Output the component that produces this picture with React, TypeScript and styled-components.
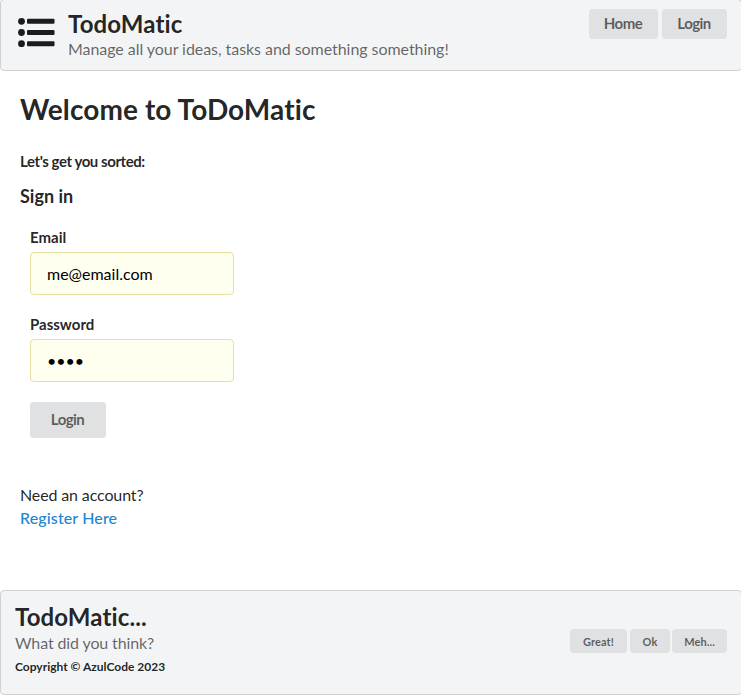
import React from 'react';
import styled, { createGlobalStyle } from 'styled-components';

const Global = createGlobalStyle`
  *, *::before, *::after { box-sizing: border-box; }
  body {
    margin: 0;
    background: #fff;
    font-family: Lato, sans-serif;
    font-size: 14px;
    line-height: 20px;
    color: rgba(0, 0, 0, 0.87);
    overflow: hidden;
    font-variant-ligatures: none;
    -webkit-font-smoothing: antialiased;
  }
`;

const Page = styled.div`
  display: flex;
  flex-direction: column;
  width: 742px;
  height: 697px;
`;

const Bar = styled.header`
  display: flex;
  height: 72px;
  margin-top: -1px;
  padding: 9px 14px 0 17px;
  background: #f3f4f5;
  border: 1px solid #d0d1d2;
  border-radius: 4px;
`;

const Logo = styled.svg`
  flex: none;
  width: 38px;
  height: 32px;
  margin: 7px 12px 0 0;
  fill: #1b1c1d;
`;

const Brand = styled.div`
  flex: 1;
`;

const Title = styled.div`
  font-size: 24px;
  line-height: 30px;
  font-weight: 700;
  letter-spacing: 0.12px;
`;

const Subtitle = styled.div`
  font-size: 16px;
  line-height: 20px;
  letter-spacing: -0.055px;
  color: rgba(0, 0, 0, 0.6);
`;

const Actions = styled.div`
  display: flex;
  gap: 4px;
`;

const Button = styled.button<{ $w: number; $size?: 'small' | 'form' }>`
  width: ${(p) => p.$w}px;
  height: ${(p) => (p.$size === 'small' ? 24 : p.$size === 'form' ? 36 : 30)}px;
  padding: ${(p) => (p.$size === 'small' ? '0' : '0 1px 3px 0')};
  border: 0;
  border-radius: 4px;
  background: #e0e1e2;
  color: rgba(0, 0, 0, 0.6);
  font-family: inherit;
  font-size: ${(p) => (p.$size === 'small' ? 11 : 15)}px;
  letter-spacing: ${(p) => (p.$size === 'small' ? 0.1 : -0.55)}px;
  font-weight: 700;
`;

const Main = styled.main`
  flex: 1;
  padding: 20px 20px 0;
`;

const Welcome = styled.h1`
  margin: 0;
  font-size: 28px;
  line-height: 36px;
  letter-spacing: 0.1px;
`;

const Lead = styled.h5`
  margin: 25px 0 0;
  font-size: 15px;
  line-height: 18px;
  letter-spacing: -0.43px;
`;

const SignIn = styled.h3`
  margin: 15px 0 0;
  font-size: 18px;
  line-height: 23px;
`;

const Form = styled.form`
  display: flex;
  flex-direction: column;
  align-items: flex-start;
  padding: 19px 10px 0;
`;

const Field = styled.div`
  display: flex;
  flex-direction: column;
  gap: 5px;
  margin-bottom: 19px;

  &:last-of-type {
    margin-bottom: 20px;
  }
`;

const Label = styled.label`
  font-size: 15px;
  line-height: 20px;
  font-weight: 700;
`;

const Input = styled.input`
  width: 204px;
  height: 43px;
  padding: 0 16px;
  border: 1px solid #e5dfa1;
  border-radius: 4px;
  background: #fffff0;
  color: #000;
  font-family: inherit;
  font-size: 16px;
  outline: 0;
`;

const Account = styled.div`
  margin-top: 45px;
  font-size: 16px;
  line-height: 23px;
  letter-spacing: -0.13px;
`;

const Link = styled.a`
  display: block;
  color: #2185d0;
  font-weight: 500;
  letter-spacing: 0.13px;
`;

const Footer = styled(Bar).attrs({ as: 'footer' })`
  height: 105px;
  margin: 0 0 2px;
  padding: 11px 14px 0 14px;
`;

const Copyright = styled.div`
  margin-top: 4px;
  font-size: 12px;
  line-height: 20px;
  font-weight: 700;
`;

const Feedback = styled(Actions)`
  gap: 3px;
  padding-top: 27px;

  & > :last-child {
    margin-left: -1px;
  }
`;

const FooterSubtitle = styled(Subtitle)`
  margin-top: 1px;
  letter-spacing: -0.12px;
`;

export default function App() {
  return (
    <Page>
      <Global />
      <Bar>
        <Logo viewBox="0 0 38 32">
          {[5.3, 16.5, 27.7].map((y) => (
            <React.Fragment key={y}>
              <circle cx="3.5" cy={y} r="3.4" />
              <rect x="9" y={y - 2.5} width="27.5" height="5" rx="1" />
            </React.Fragment>
          ))}
        </Logo>
        <Brand>
          <Title>TodoMatic</Title>
          <Subtitle>Manage all your ideas, tasks and something something!</Subtitle>
        </Brand>
        <Actions>
          <Button $w={69}>Home</Button>
          <Button $w={65}>Login</Button>
        </Actions>
      </Bar>
      <Main>
        <Welcome>Welcome to ToDoMatic</Welcome>
        <Lead>Let's get you sorted:</Lead>
        <SignIn>Sign in</SignIn>
        <Form>
          <Field>
            <Label htmlFor="email">Email</Label>
            <Input id="email" defaultValue="me@email.com" />
          </Field>
          <Field>
            <Label htmlFor="password">Password</Label>
            <Input id="password" type="password" defaultValue="1234" />
          </Field>
          <Button type="button" $w={76} $size="form">Login</Button>
        </Form>
        <Account>
          Need an account?
          <Link>Register Here</Link>
        </Account>
      </Main>
      <Footer>
        <Brand>
          <Title>TodoMatic...</Title>
          <FooterSubtitle>What did you think?</FooterSubtitle>
          <Copyright>Copyright © AzulCode 2023</Copyright>
        </Brand>
        <Feedback>
          <Button $w={57} $size="small">Great!</Button>
          <Button $w={40} $size="small">Ok</Button>
          <Button $w={55} $size="small">Meh...</Button>
        </Feedback>
      </Footer>
    </Page>
  );
}
